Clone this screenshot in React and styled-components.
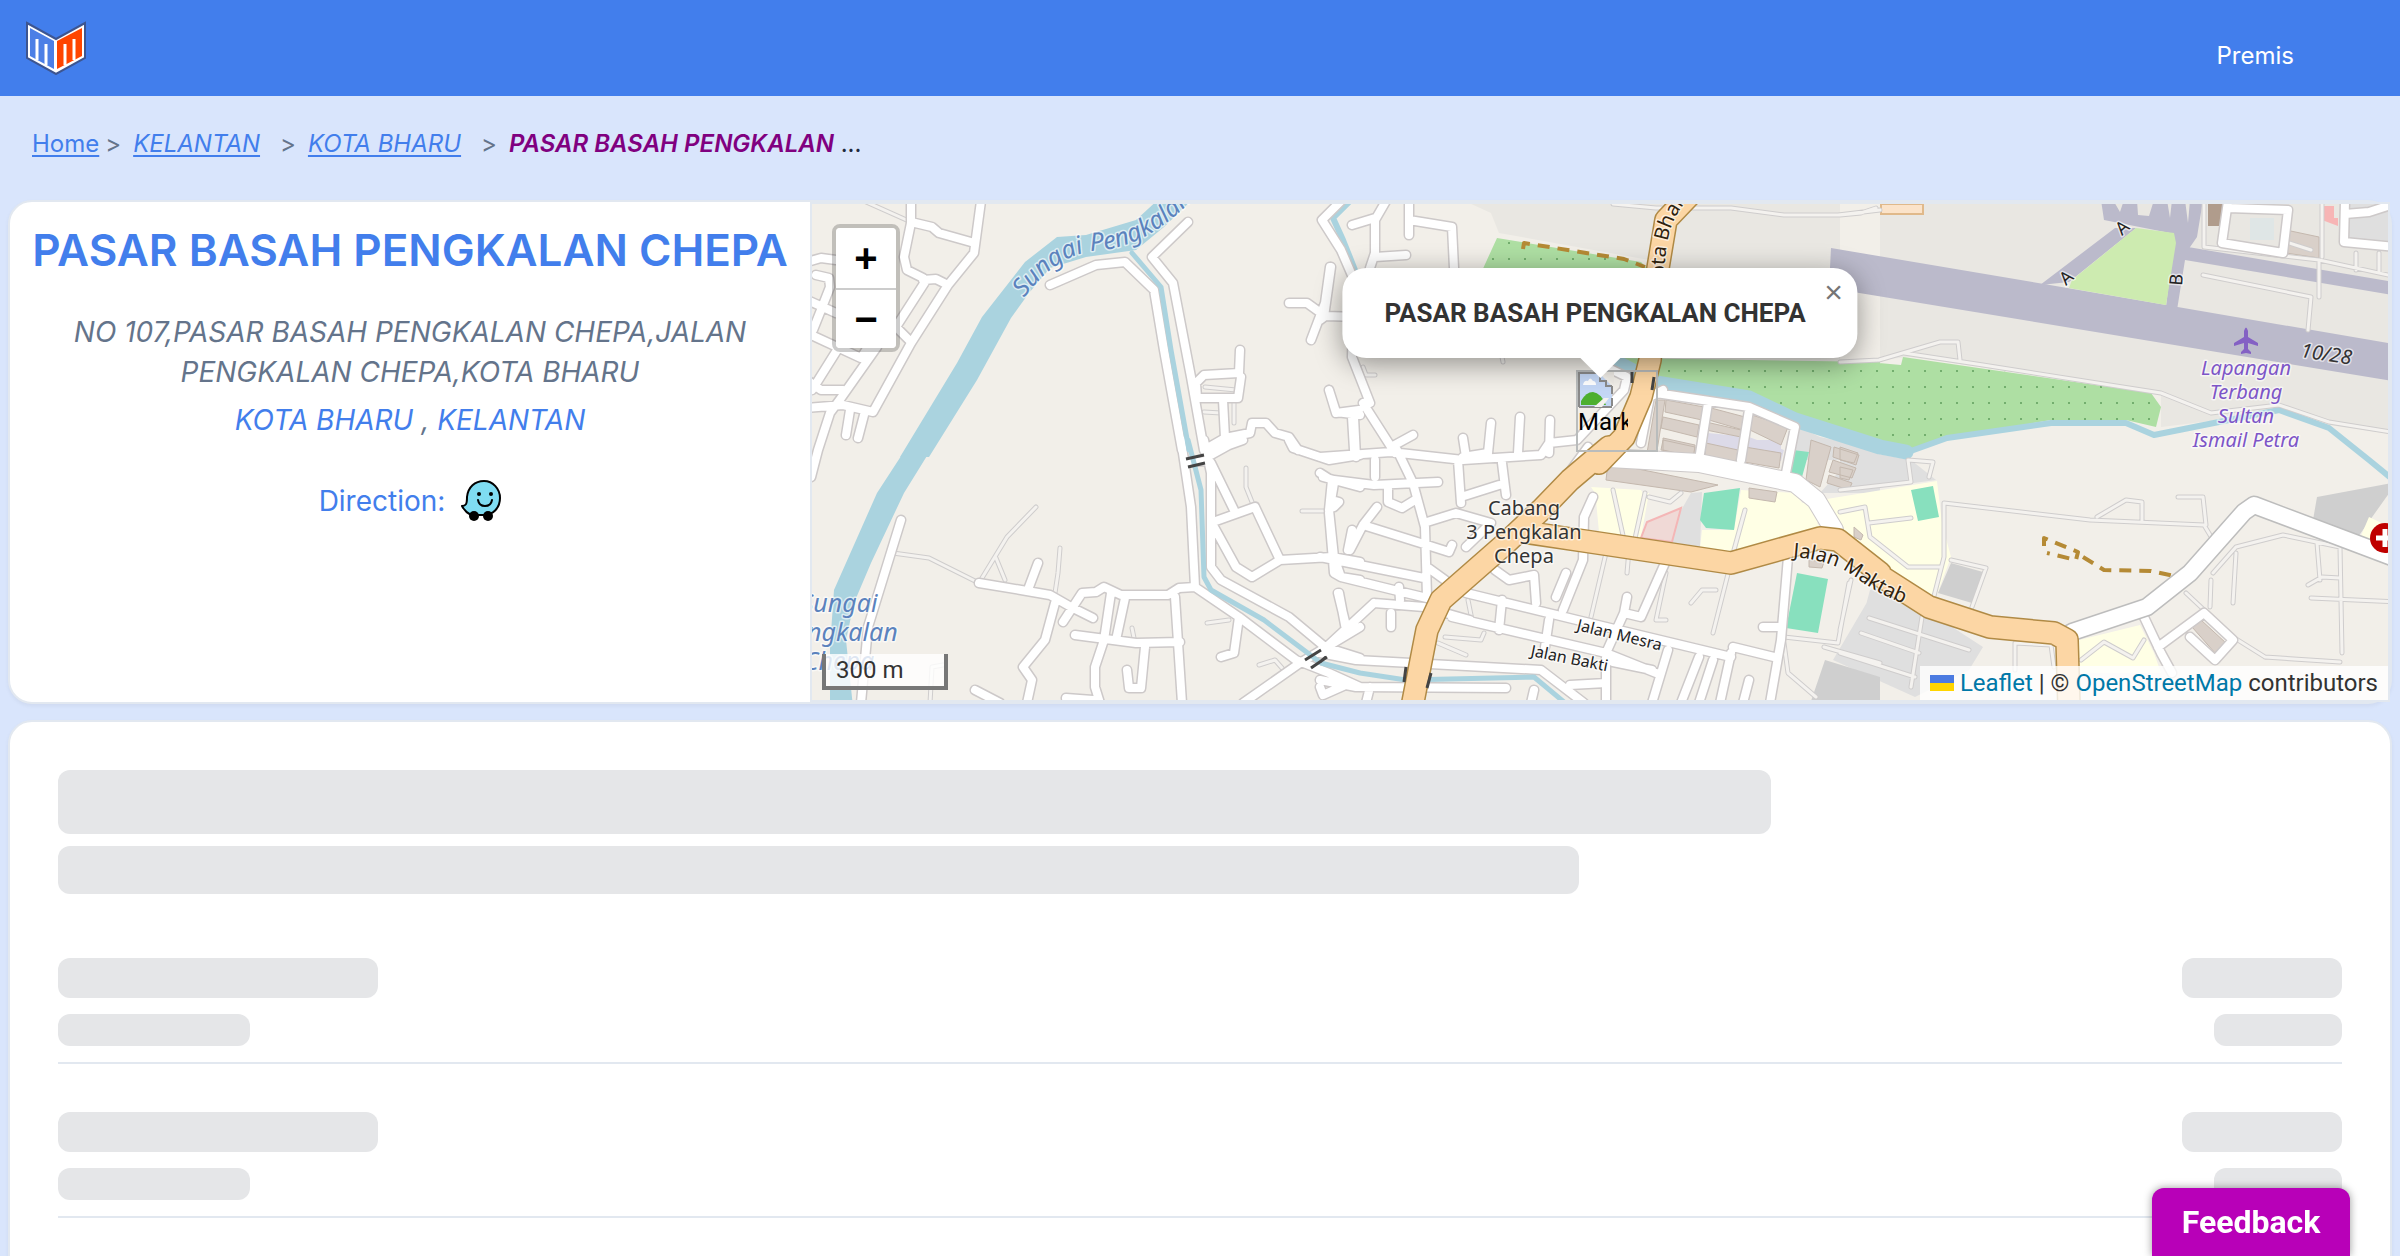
import styled, { createGlobalStyle, css } from "styled-components";

const GlobalStyle = createGlobalStyle`
    * {
        box-sizing: border-box;
    }
    html {
        scrollbar-width: none;
    }
    body {
        margin: 0;
        background: #d9e5fc;
        color: #64748b;
        font-family: Inter, "Liberation Sans", sans-serif;
        font-size: 24px;
        line-height: 36px;
    }
`;

// Map geometry. Each sheet has its own origin on the map and its own grid,
// MAP_GRID units to a map pixel.
const MAP_GRID = { x: 2.8, y: 3 };
const SHEETS = {
    nw: [800, 190],
    sw: [800, 440],
    n: [1320, 190],
    s: [1320, 440],
    ne: [1840, 190],
    se: [1840, 440],
};

const toPath = (sheet, points, closed) => {
    const [left, top] = SHEETS[sheet];
    const steps = points.split(" ").map((point) => {
        const [x, y] = point.split(",").map(Number);
        return `${Math.round(left + x / MAP_GRID.x)} ${Math.round(top + y / MAP_GRID.y)}`;
    });
    return `M${steps.join("L")}${closed ? "Z" : ""}`;
};

const toLayer = (groups, closed) =>
    Object.entries(groups)
        .map(([sheet, lines]) => lines.map((line) => toPath(sheet, line, closed)).join(""))
        .join("");

const streets = toLayer({
    nw: [
        "310,32 310,100 290,200 300,240 345,265 350,275 270,410",
        "310,95 370,110 390,130 480,155",
        "507,32 487,190 415,285 310,460 205,665 120,645 20,655",
        "345,270 380,268 415,285",
        "20,215 60,205 100,210",
        "45,255 80,265 85,290 60,360 35,420",
        "20,330 100,370",
        "20,430 170,505 190,470",
        "110,470 33,600",
        "20,570 60,600 120,600",
        "270,410 310,455",
        "215,470 115,625 85,670 50,780 30,860",
        "140,660 130,735",
        "180,675 163,745",
        "700,285 830,225 910,215 990,300 1020,480 1070,780",
        "1085,95 985,200 1045,280 1095,560 1130,780",
        "1485,230 1470,340 1430,450",
        "1370,340 1420,340 1470,378 1568,382",
        "1232,480 1228,550 1130,555 1110,580 1112,625 1225,625 1235,560",
        "1183,630 1190,745 1130,780",
        "1190,745 1260,730 1265,700 1305,700 1330,730 1370,740 1395,780",
        "1480,600 1500,665 1568,675",
        "1545,680 1550,780",
    ],
    sw: [
        "1068,0 1095,200 1105,440 1230,530 1390,660 1480,700 1568,740",
        "1130,0 1150,100 1150,380 1180,420 1370,530 1470,620 1568,655",
        "1150,70 1215,210",
        "1155,245 1275,200 1345,360 1265,410 1220,380 1160,260",
        "1345,360 1490,350 1568,365",
        "1150,45 1200,15 1240,0",
        "1370,0 1380,25 1480,60 1568,45",
        "1465,110 1568,140",
        "1490,120 1480,210 1495,350 1515,410 1568,420",
        "1545,270 1535,330",
        "1490,180 1510,185 1495,200",
        "282,240 190,560 170,790",
        "500,430 620,450 700,465 760,500 820,535",
        "665,370 640,440",
        "735,545 790,460 830,455 850,440 900,465 1030,465 1060,445 1105,440",
        "715,490 685,600 625,680 650,720 635,790",
        "870,460 850,600 825,680 825,740 840,790",
        "910,475 885,600",
        "770,585 940,610 1065,605",
        "1050,470 1070,790",
        "965,620 955,745 920,745 915,690",
        "490,750 560,790",
        "745,775 820,780",
        "1230,530 1215,640 1180,650",
        "1568,560 1400,670 1240,790",
        "1508,460 1530,570",
        "1455,740 1465,765 1540,730",
        "1086,66 1136,62",
    ],
    n: [
        "60,32 5,90 60,180 95,270 90,500 140,640",
        "185,32 155,90 155,190 140,235",
        "90,105 155,85",
        "155,200 240,195",
        "250,32 250,135",
        "250,90 370,110 375,235",
        "30,230 10,380 0,390",
        "25,600 45,670 110,660",
        "95,680 100,800",
        "120,640 210,790",
        "200,770 260,735",
        "560,680 555,790",
        "480,700 470,790 400,800",
        "400,745 410,800",
        "645,690 640,790",
        "640,760 720,750 850,600 860,560 800,530",
        "960,600 925,620 900,760",
        "940,610 1200,650 1330,710 1300,880",
        "1085,640 1060,810",
        "1200,660 1180,810",
    ],
    s: [
        "0,50 200,35 400,60 620,45 640,10",
        "215,30 260,130 295,260 300,470",
        "0,100 30,120 40,130 25,220 40,400 60,410 240,460 300,475",
        "40,120 150,135 330,125",
        "155,60 155,110",
        "190,140 190,185 230,205 265,180",
        "385,60 395,190",
        "395,170 500,135",
        "510,70 520,165",
        "160,200 120,255 85,330",
        "120,255 300,315 360,335 370,315",
        "300,245 380,220 480,250 410,320",
        "0,350 290,415",
        "300,380 350,420",
        "690,110 750,20",
        "410,460 720,540 1150,650",
        "370,530 800,640 940,700",
        "510,480 500,570",
        "640,540 630,620",
        "490,390 530,420 600,405 605,490",
        "765,170 740,230 735,360 680,510",
        "690,400 660,470",
        "965,370 900,530 850,520 860,470",
        "850,520 800,640 800,790",
        "700,735 800,730",
        "1310,350 1290,600 1260,790",
        "1240,560 1290,560",
        "150,490 0,640",
        "50,460 75,570",
        "150,490 290,500 420,540",
        "220,440 225,480",
        "0,640 100,660 620,690 740,790",
        "0,720 100,740 520,745",
        "820,665 930,690",
        "975,630 930,790",
        "1060,650 1010,790",
        "1100,660 1060,790",
        "1155,620 1270,650",
        "1150,640 1120,790",
        "1200,720 1185,790",
        "200,520 200,560",
        "140,740 130,790",
        "600,750 590,790",
    ],
    ne: [
        "1085,32 1070,160 1240,190 1255,60 1085,55",
        "1415,32 1410,155 1560,170",
        "1415,72 1480,65 1560,40",
    ],
    se: [
        "850,530 900,640 930,700",
        "890,620 1020,520 1100,600 1050,660 980,590",
    ],
});

const lanes = toLayer({
    nw: ["180,32 310,95", "1135,590 1220,600", "1215,640 1215,700", "1130,665 1180,670"],
    sw: [
        "260,340 360,355 500,430",
        "510,415 580,290 660,200",
        "550,355 575,420",
        "728,325 722,400 715,460",
        "1250,85 1250,140 1270,200",
        "1140,550 1200,540",
        "1285,675 1330,660 1350,685",
        "1405,212 1470,212",
        "365,790 370,680 400,675",
        "930,565 935,595",
    ],
    n: ["510,500 512,515", "120,530 130,555 155,555", "820,42 940,55 1150,55 1300,75 1450,75 1568,60"],
    s: [
        "800,340 760,530",
        "1145,390 1100,580",
        "1190,210 1160,330",
        "970,400 940,540 970,540",
        "820,150 850,300",
        "910,160 880,310",
        "350,590 450,600 460,580",
        "330,610 410,645",
        "1040,490 1070,450 1110,450",
        "1480,430 1450,610 1300,590",
        "1300,610 1310,700 1390,770",
        "920,170 980,185 1010,160",
        "415,480 425,540",
        "865,330 860,400",
        "1410,620 1568,670",
    ],
    ne: [
        "0,75 60,70 100,55",
        "0,515 110,510 280,455 330,455 335,510",
        "180,490 400,525 900,610 1040,670 1230,645 1370,695 1560,730",
        "1015,255 1320,320 1310,420",
        "1020,42 1020,170 1340,210 1340,320",
        "1340,210 1560,260",
        "1350,42 1350,200",
        "1445,190 1445,240",
        "1510,190 1510,250",
        "1250,155 1320,180",
    ],
    se: [
        "290,190 700,240 1020,255 1045,300",
        "720,230 800,180 845,185 845,240",
        "945,172 1015,172 1025,255",
        "1045,400 1110,320 1240,285 1400,320 1405,640",
        "1320,475 1560,485",
        "1310,435 1350,410 1400,415",
        "1190,650 1400,665",
        "1190,650 1100,590 970,460",
        "1110,340 1100,490",
        "1040,420 1035,500",
        "290,190 290,350 260,480",
        "310,360 410,385 370,500",
        "0,215 70,200 85,290 190,380 280,380",
        "80,250 200,235",
        "0,150 200,125 190,60 260,65 250,110",
        "80,535 360,630",
        "230,530 200,740",
        "0,570 30,420",
        "60,580 220,640",
        "0,640 210,710",
        "490,690 490,610 590,615 600,680",
        "675,660 740,605 820,655 850,600",
        "1335,310 1345,420",
    ],
});

const avenues = toLayer({
    s: ["810,55 1060,70 1330,130 1390,180 1440,270"],
});
const secondary = toLayer({
    se: ["650,575 860,500 980,400 1130,215 1160,195 1568,360"],
});
const primary = toLayer({
    n: ["1030,20 970,90 945,235 925,510 900,620 850,740 780,820"],
    s: [
        "810,20 700,120 620,210 520,310 340,480 300,570 258,800",
        "570,275 760,305 1150,368 1400,295 1450,300 1568,400",
    ],
    se: ["110,405 250,500 420,560 600,578 635,600 640,800"],
});

const bridges = toLayer({
    sw: ["1080,58 1130,44", "1085,82 1135,68", "1415,660 1460,630", "1430,683 1475,650"],
    n: ["873,545 873,580", "936,560 930,600"],
    s: ["240,680 236,725", "312,700 300,745", "0,665 18,650"],
});

const river = toLayer(
    {
        nw: [
            "1010,20 940,90 800,135 720,140 630,215 510,380 440,520 280,800 360,800 495,570 590,385 640,310 700,235 800,200 940,180 1020,110 1105,20",
        ],
        sw: ["330,-30 215,160 95,450 85,620 85,800 148,800 130,600 150,490 200,370 290,160 400,-30"],
    },
    true
);
const canal = toLayer({ n: ["800,500 940,580 1200,625 1330,690 1568,770 1640,785"] });
const brook = toLayer({
    n: ["85,32 35,85 65,150 98,240"],
    ne: ["190,785 300,745 590,698 800,700 880,735 1230,660 1370,715 1480,810 1560,880"],
});
const stream = toLayer({
    nw: ["930,190 1010,290 1040,480 1090,780"],
    sw: ["1085,0 1122,150 1130,410 1150,450 1300,540 1460,670 1568,700"],
    s: ["112,700 240,720 600,712 700,800"],
});

const airfield = toLayer(
    {
        n: ["380,20 480,70 500,130 920,210 940,300 930,510 1568,520 1568,20"],
        ne: ["0,20 1600,20 1600,740 1370,705 1230,655 1060,690 900,710 900,610 200,500 0,520"],
    },
    true
);
const wood = toLayer(
    {
        n: ["495,145 900,215 930,250 450,250", "840,505 1568,515 1568,780 1440,720 1200,610 950,560"],
        ne: ["110,520 170,525 175,500 870,610 900,650 885,710 800,690 590,690 350,735 200,780 100,770"],
    },
    true
);
const runway = toLayer(
    {
        ne: [
            "-26,175 570,282 1600,472 1600,582 -32,295",
            "730,30 1015,30 1000,140 975,180 925,130 740,90",
            "770,115 830,115 640,275 560,285",
            "940,100 975,170 1600,285 1600,325 965,210 943,360 912,350",
        ],
    },
    true
);
const apronGaps = toLayer(
    { ne: ["765,30 795,30 785,65", "832,30 880,30 865,78 835,75", "915,30 930,30 925,85", "965,30 980,30 975,100"] },
    true
);
const grass = toLayer({ ne: ["830,115 935,130 940,160 912,345 640,295 650,270"] }, true);
const school = toLayer(
    {
        s: [
            "770,150 920,160 900,290 780,275",
            "1180,150 1330,160 1400,260 1150,335 1065,325 1070,270 1160,270",
            "760,140 900,150 910,170 770,160",
        ],
        se: ["-140,195 272,122 285,250 310,350 270,470 150,430 0,270 -110,230", "670,600 840,555 880,640 900,700 670,700", "1480,230 1540,260 1530,330 1455,295"],
    },
    true
);
const pitches = toLayer(
    {
        s: [
            "1075,160 1175,145 1160,270 1080,265 1065,240",
            "1335,400 1422,418 1395,580 1305,565",
            "1325,30 1370,35 1350,110 1315,100",
        ],
        se: ["198,150 260,138 277,230 217,243"],
    },
    true
);
const paved = toLayer(
    {
        n: ["1340,710 1400,740 1568,780 1568,810 1320,810"],
        s: ["1040,160 1070,155 1065,325 960,305", "1490,50 1568,50 1568,160 1400,160", "1540,450 1568,440 1568,720 1490,650"],
        se: ["0,20 200,60 270,120 0,160", "100,440 240,510 400,620 360,690 210,770 -20,660"],
        ne: ["1420,42 1534,42 1534,160 1420,150"],
    },
    true
);
const parking = toLayer(
    {
        se: ["1335,170 1560,125 1450,290 1325,240", "310,370 400,395 370,490 275,460"],
        s: ["1415,660 1568,710 1568,800 1370,800"],
    },
    true
);
const lots = toLayer({ n: ["1085,730 1200,740 1300,780 1290,812 1085,800"], s: ["1075,0 1290,0 1290,30 1075,10"] }, true);
const buildings = toLayer(
    {
        n: [
            "970,630 1075,650 1070,690 965,665",
            "960,680 1060,705 1055,740 955,715",
            "960,745 1050,765 1050,800 960,780",
            "1095,655 1190,680 1185,720 1090,690",
            "1210,675 1310,710 1290,765 1205,720",
            "1080,695 1180,720 1180,740 1080,720",
            "940,630 965,630 940,800 915,790",
        ],
        s: [
            "805,70 1115,135 1040,155 800,120",
            "960,0 1050,20 1045,50 955,30",
            "1080,10 1170,30 1165,65 1078,45",
            "1190,20 1290,40 1285,85 1188,65",
            "1375,0 1430,20 1400,140 1360,120",
            "1440,20 1510,45 1500,75 1435,50",
            "1435,60 1500,85 1490,115 1425,95",
            "1425,105 1490,130 1480,150 1420,130",
            "1200,145 1280,155 1275,185 1200,175",
            "1370,360 1410,365 1405,385 1368,380",
        ],
        ne: ["1250,120 1340,140 1340,205 1250,190"],
        se: ["0,20 50,40 40,70 0,60", "0,80 35,90 25,120 0,115", "40,260 65,285 60,300 40,290", "985,560 1010,540 1080,610 1050,640"],
    },
    true
);
const tracks = toLayer({
    n: ["568,178 572,160 850,208 910,230"],
    se: ["570,318 570,295 665,335 660,360 580,338", "680,350 740,390 870,392 950,410"],
});
const clinic = toLayer({ s: ["1012,205 985,305 900,295 915,245"] }, true);

const places = [
    { x: 1524, y: 515, rows: ["Cabang", "3 Pengkalan", "Chepa"], size: 20, fill: "#333" },
    { x: 2246, y: 375, rows: ["Lapangan", "Terbang", "Sultan", "Ismail Petra"], size: 20, fill: "#7d55c7", italic: true },
    { x: 839, y: 612, rows: ["Sungai", "Pengkalan", "Chepa"], size: 25, fill: "#5b82bd", italic: true, leading: 29 },
];

const roadLabels = [
    { id: "river", d: "M1024 298Q1058 252 1102 250Q1152 245 1202 190", text: "Sungai Pengkalan", size: 25, fill: "#5b82bd", italic: true },
    { id: "mesra", d: "M1576 630L1690 658", text: "Jalan Mesra", size: 16, fill: "#222" },
    { id: "bakti", d: "M1530 656L1640 678", text: "Jalan Bakti", size: 16, fill: "#222" },
    { id: "maktab", d: "M1793 557Q1835 560 1862 582Q1885 598 1925 612", text: "Jalan Maktab", size: 20, fill: "#2f220d" },
    { id: "kota", d: "M1665 290Q1662 235 1680 210L1700 180", text: "Kota Bharu", size: 20, fill: "#2f220d" },
    { id: "runway", d: "M2300 357L2380 369", text: "10/28", size: 20, fill: "#333", italic: true },
    { id: "taxiA", d: "M2122 236L2140 220", text: "A", size: 18, fill: "#222" },
    { id: "taxiA2", d: "M2066 286L2084 270", text: "A", size: 18, fill: "#222" },
    { id: "taxiB", d: "M2182 286L2184 260", text: "B", size: 18, fill: "#222" },
];

const MapDrawing = () => <MapSvg viewBox="812 204 1576 496" preserveAspectRatio="xMidYMid slice" role="img" aria-label="Map">
    <defs>
        <pattern id="trees" x="1660" y="380" width="16" height="16" patternUnits="userSpaceOnUse">
            <rect width="16" height="16" fill="#aedfa3" />
            <circle cx="9" cy="7" r="1" fill="#5f9e5c" />
        </pattern>
        {roadLabels.map(({ id, d }) => <path key={id} id={id} d={d} />)}
    </defs>
    <rect x="812" y="204" width="1576" height="496" fill="#f2efe9" />
    <path d={airfield} fill="#e9e7e2" />
    <path d={wood} fill="url(#trees)" />
    <path d={paved} fill="#dfdfdf" />
    <path d={parking} fill="#cfcfcf" />
    <path d={school} fill="#ffffe5" />
    <path d={lots} fill="#dcdae8" />
    <path d={runway} fill="#bbbacb" />
    <path d={apronGaps} fill="#e9e7e2" />
    <path d={grass} fill="#cdebb0" />
    <path d={buildings} fill="#d9d0c9" stroke="#c4b8ae" />
    <path d={pitches} fill="#88e0be" />
    <path d={clinic} fill="#f0d9d6" stroke="#f4b6b6" strokeWidth="2" />
    <path d={river} fill="#aad3df" />
    <path d="M1881 204h42v10h-42z" fill="#fbe3c9" stroke="#e0b98a" strokeWidth="2" />
    <path d="M2208 204h14v22h-14z" fill="#b09c8c" />
    <path d="M2250 218h24v22h-24z" fill="#dfe6e6" />
    <path d="M2322 206h12v12h4v8l-16 -6z" fill="#f7b5b5" />
    <g fill="none" strokeLinejoin="round" strokeLinecap="round">
        <path d={canal} stroke="#aad3df" strokeWidth="15" />
        <path d={brook} stroke="#aad3df" strokeWidth="6" />
        <path d={lanes} stroke="#cfcdcd" strokeWidth="5" />
        <path d={lanes} stroke="#f4f2ef" strokeWidth="3" />
        <path d={tracks} stroke="#b58a35" strokeWidth="4" strokeDasharray="12 8" strokeLinecap="butt" />
        <path d={streets} stroke="#cdc9c9" strokeWidth="11" />
        <path d={avenues} stroke="#cdc9c9" strokeWidth="20" />
        <path d={streets} stroke="#fff" strokeWidth="8" />
        <path d={avenues} stroke="#fff" strokeWidth="18" />
        <path d={stream} stroke="#aad3df" strokeWidth="5" />
        <path d={secondary} stroke="#bdbdbd" strokeWidth="19" />
        <path d={secondary} stroke="#fff" strokeWidth="16" />
        <path d={primary} stroke="#b08a45" strokeWidth="24" />
        <path d={primary} stroke="#fcd6a4" strokeWidth="21" />
        <path d={bridges} stroke="#444" strokeWidth="3" strokeLinecap="butt" />
    </g>
    <path d="M2244 331q2 -7 4 0v6l10 6v3l-10 -3v6l3 3v2l-5 -1l-5 1v-2l3 -3v-6l-10 3v-3l10 -6z" fill="#8461c4" />
    <circle cx="2385" cy="538" r="15" fill="#bf0000" />
    <path d="M2385 529v18M2376 538h18" stroke="#fff" strokeWidth="5" />
    <MapLabels>
        {places.map(({ x, y, rows, size, fill, italic, leading = 24 }) => rows.map((row, index) =>
            <MapLabel key={row + y} x={x} y={y + index * leading} textAnchor="middle" fill={fill} $size={size} $italic={italic}>{row}</MapLabel>
        ))}
        {roadLabels.map(({ id, text, size, fill, italic }) =>
            <MapLabel key={id} fill={fill} $size={size} $italic={italic}>
                <textPath href={`#${id}`}>{text}</textPath>
            </MapLabel>
        )}
    </MapLabels>
</MapSvg>;

const Logo = () => <svg width="60" height="54" viewBox="0 0 60 54" aria-hidden="true">
    <path d="M1 2L30 18L59 2V37L30 53L1 37Z" fill="#fff" stroke="#3d5590" strokeWidth="2" />
    <path d="M4 7L28 20V48L4 35Z" fill="#4c7fe6" />
    <path d="M56 7L31 20V48L56 35Z" fill="#ff4500" />
    <path d="M11 18V39M20 23V44M39 44V23M48 39V18" stroke="#fff" strokeWidth="3" fill="none" />
</svg>;

const WazeIcon = () => <svg width="40" height="42" viewBox="0 0 40 42" aria-hidden="true">
    <path d="M10 35C6 33 3 30 1 26C5 26 6 24 6 17C7 7 14 1 23 1C32 1 39 9 39 18C39 28 32 35 23 35Z" fill="#7fdcf2" stroke="#000" strokeWidth="2" strokeLinejoin="round" />
    <circle cx="13" cy="36" r="5" />
    <circle cx="27" cy="36" r="5" />
    <circle cx="18" cy="14" r="2" />
    <circle cx="30" cy="14" r="2" />
    <path d="M17 20Q18 26 24 26Q30 26 31 20" fill="none" stroke="#000" strokeWidth="2" strokeLinecap="round" />
</svg>;

const BrokenImage = () => <svg width="36" height="36" viewBox="0 0 36 36" aria-hidden="true">
    <path d="M2 2H22L34 14V34H2Z" fill="#c4d7f5" />
    <path d="M5 13q1 -5 5 -4q2 -5 5 0q3 0 3 4z" fill="#fff" />
    <path d="M3 33V29Q8 20 15 20Q23 21 28 33Z" fill="#4caf2f" />
    <path d="M1 35V1H22V9H28V14H34M1 35H34" fill="none" stroke="#8a8a8a" strokeWidth="2" />
    <path d="M34 14V34" fill="none" stroke="#8a8a8a" strokeWidth="2" strokeDasharray="8 4" />
    <path d="M36 0H24L36 13Z" fill="#efece6" />
    <path d="M16 35L26 26H31L24 35Z" fill="#f4f2ef" />
</svg>;

const App = () => <>
    <GlobalStyle />
    <Header>
        <LogoLink href="#" aria-label="Home page"><Logo /></LogoLink>
        <NavLink href="#premis">Premis</NavLink>
    </Header>
    <Breadcrumb aria-label="Breadcrumb">
        <Crumb href="#">Home</Crumb>
        <Separator>&gt;</Separator>
        <Crumb href="#kelantan" $italic>KELANTAN</Crumb>
        <Separator $wide>&gt;</Separator>
        <Crumb href="#kota-bharu" $italic>KOTA BHARU</Crumb>
        <Separator $wide>&gt;</Separator>
        <Current><em>PASAR BASAH PENGKALAN</em> ...</Current>
    </Breadcrumb>
    <Main>
        <PremiseCard>
            <Info>
                <Title>PASAR BASAH PENGKALAN CHEPA</Title>
                <Address>NO 107,PASAR BASAH PENGKALAN CHEPA,JALAN PENGKALAN CHEPA,KOTA BHARU</Address>
                <Region>
                    <RegionLink href="#kota-bharu">KOTA BHARU</RegionLink> , <RegionLink href="#kelantan">KELANTAN</RegionLink>
                </Region>
                <Direction>
                    Direction:
                    <IconLink href="#waze" aria-label="Waze"><WazeIcon /></IconLink>
                </Direction>
            </Info>
            <MapArea>
                <MapDrawing />
                <Marker>
                    <BrokenImage />
                    <MarkerAlt>Marker</MarkerAlt>
                </Marker>
                <Popup>
                    PASAR BASAH PENGKALAN CHEPA
                    <PopupClose type="button" aria-label="Close popup">×</PopupClose>
                </Popup>
                <ZoomControl>
                    <ZoomButton type="button" aria-label="Zoom in">+</ZoomButton>
                    <ZoomButton type="button" aria-label="Zoom out">−</ZoomButton>
                </ZoomControl>
                <Scale>300 m</Scale>
                <Attribution>
                    <Flag />
                    <span><MapLink href="#leaflet">Leaflet</MapLink> | © <MapLink href="#osm">OpenStreetMap</MapLink> contributors</span>
                </Attribution>
            </MapArea>
        </PremiseCard>
        <PricesCard aria-busy="true">
            <Bar $width="75%" $height={64} />
            <Bar $width="66.6%" $height={48} />
            <Rows>
                {[0, 1, 2].map((row) => <SkeletonRow key={row}>
                    <Bars>
                        <Bar $width="320px" $height={40} />
                        <Bar $width="192px" $height={32} />
                    </Bars>
                    <Bars $end>
                        <Bar $width="160px" $height={40} />
                        <Bar $width="128px" $height={32} />
                    </Bars>
                </SkeletonRow>)}
            </Rows>
        </PricesCard>
    </Main>
    <Feedback type="button">Feedback</Feedback>
</>;

const Header = styled.header`
    display: flex;
    justify-content: space-between;
    align-items: center;
    height: 96px;
    padding: 0 106px 0 26px;
    background: #427eec;
`;

const LogoLink = styled.a`
    display: flex;
`;

const NavLink = styled.a`
    padding-top: 16px;
    color: #fff;
    text-decoration: none;
`;

const Breadcrumb = styled.nav`
    display: flex;
    align-items: center;
    padding: 30px 32px 38px;
`;

const Crumb = styled.a`
    color: #427eec;
    font-style: ${({ $italic }) => ($italic ? "italic" : "normal")};
    text-underline-offset: 3px;
`;

const Separator = styled.span`
    margin: ${({ $wide }) => ($wide ? "0 12px 0 20px" : "0 12px 0 6px")};
`;

const Current = styled.span`
    color: #1e293b;

    em {
        color: #800080;
        font-weight: 600;
    }
`;

const Main = styled.main`
    display: flex;
    flex-direction: column;
    gap: 16px;
    padding: 0 8px;
`;

const card = css`
    background: #fff;
    border: 2px solid #e2e8f0;
    border-radius: 24px;
    box-shadow: 0 2px 4px rgba(0, 0, 0, 0.05);
`;

const PremiseCard = styled.section`
    ${card}
    display: grid;
    grid-template-columns: 800px 1fr;
`;

const Info = styled.div`
    display: flex;
    flex-direction: column;
    align-items: center;
    padding: 18px 20px;
    font-size: 28px;
    line-height: 40px;
    text-align: center;
`;

const Title = styled.h1`
    margin: 0 0 32px;
    color: #427eec;
    font-size: 44px;
    font-weight: 600;
    line-height: 60px;
    white-space: nowrap;
`;

const Address = styled.p`
    max-width: 720px;
    margin: 0 0 8px;
    font-style: italic;
`;

const Region = styled.p`
    margin: 0 0 40px;
    font-style: italic;
`;

const RegionLink = styled.a`
    color: #427eec;
    text-decoration: none;
`;

const Direction = styled.div`
    display: flex;
    align-items: center;
    gap: 16px;
    color: #427eec;
`;

const IconLink = styled.a`
    display: flex;
`;

const MapArea = styled.div`
    position: relative;
    height: 500px;
    border: 2px solid #e2e8f0;
    font-family: Roboto, "Liberation Sans", sans-serif;
    color: #333;
    overflow: hidden;
`;

const MapSvg = styled.svg`
    display: block;
    width: 100%;
    height: 100%;
`;

const MapLabels = styled.g`
    paint-order: stroke;
    stroke: rgba(255, 255, 255, 0.6);
    stroke-width: 3px;
    stroke-linejoin: round;
`;

const MapLabel = styled.text`
    font-family: "Noto Sans", "Open Sans", sans-serif;
    font-size: ${({ $size }) => $size}px;
    font-style: ${({ $italic }) => ($italic ? "italic" : "normal")};
`;

const Marker = styled.div`
    position: absolute;
    top: 166px;
    left: calc(50% - 24px);
    display: flex;
    flex-direction: column;
    width: 82px;
    height: 82px;
    border: 2px solid #b9bcbc;
    color: #000;
    line-height: 28px;
`;

const MarkerAlt = styled.span`
    width: 50px;
    overflow: hidden;
`;

const Popup = styled.div`
    position: absolute;
    top: 64px;
    left: 50%;
    padding: 27px 52px 27px 42px;
    border-radius: 24px;
    background: #fff;
    box-shadow: 0 6px 28px rgba(0, 0, 0, 0.4);
    font-size: 26px;
    font-weight: 700;
    white-space: nowrap;
    transform: translateX(-50%);

    &::after {
        content: "";
        position: absolute;
        top: 100%;
        left: 50%;
        border: 20px solid transparent;
        border-top-color: #fff;
        border-bottom-width: 0;
        transform: translateX(-50%);
    }
`;

const PopupClose = styled.button`
    position: absolute;
    top: 0;
    right: 0;
    width: 48px;
    height: 48px;
    padding: 0;
    border: 0;
    background: none;
    color: #757575;
    font: 32px/48px "Liberation Sans", sans-serif;
`;

const ZoomControl = styled.div`
    position: absolute;
    top: 20px;
    left: 20px;
    width: 68px;
    border: 4px solid rgba(0, 0, 0, 0.2);
    border-radius: 8px;
    background-clip: padding-box;
    overflow: hidden;
`;

const ZoomButton = styled.button`
    display: block;
    width: 60px;
    height: 60px;
    padding: 0;
    border: 0;
    background: #fff;
    color: #000;
    font: bold 40px/56px "Liberation Sans", sans-serif;

    & + & {
        border-top: 2px solid #ccc;
    }
`;

const Scale = styled.div`
    position: absolute;
    bottom: 10px;
    left: 10px;
    width: 126px;
    height: 36px;
    padding-left: 10px;
    border: 4px solid #777;
    border-top: 0;
    background: rgba(255, 255, 255, 0.8);
    line-height: 32px;
`;

const Attribution = styled.div`
    position: absolute;
    right: 0;
    bottom: 0;
    display: flex;
    align-items: center;
    gap: 6px;
    padding: 0 10px;
    background: rgba(255, 255, 255, 0.8);
    line-height: 34px;
`;

const Flag = styled.span`
    width: 24px;
    height: 16px;
    background: linear-gradient(#4c7be1 50%, #ffd500 50%);
`;

const MapLink = styled.a`
    color: #0078a8;
    text-decoration: none;
`;

const PricesCard = styled.section`
    ${card}
    display: flex;
    flex-direction: column;
    gap: 12px;
    padding: 48px;
    margin-bottom: 20px;
`;

const Bar = styled.div`
    width: ${({ $width }) => $width};
    height: ${({ $height }) => $height}px;
    border-radius: 12px;
    background: #e5e6e8;
`;

const Rows = styled.div`
    display: flex;
    flex-direction: column;
    gap: 48px;
    margin-top: 52px;
`;

const SkeletonRow = styled.div`
    display: flex;
    justify-content: space-between;
    padding-bottom: 16px;
    border-bottom: 2px solid #e2e8f0;
`;

const Bars = styled.div`
    display: flex;
    flex-direction: column;
    align-items: ${({ $end }) => ($end ? "flex-end" : "flex-start")};
    gap: 16px;
`;

const Feedback = styled.button`
    position: fixed;
    right: 50px;
    bottom: 0;
    width: 198px;
    height: 68px;
    padding: 0;
    border: 0;
    border-radius: 12px 12px 0 0;
    background: #b800b8;
    box-shadow: 0 0 8px rgba(0, 0, 0, 0.4);
    color: #fff;
    font: 700 32px/64px Roboto, "Liberation Sans", sans-serif;
`;

export default App;
